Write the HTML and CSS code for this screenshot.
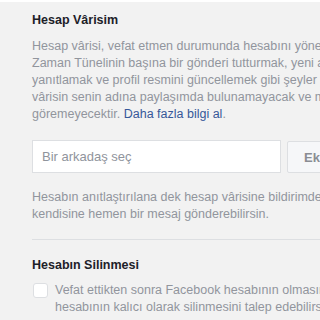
FILE: index.html
```html
<!DOCTYPE html>
<html lang="tr">
<head>
  <meta charset="UTF-8">
  <meta name="viewport" content="width=device-width, initial-scale=1.0">
  <title>Hesap Vârisim</title>
  <link rel="stylesheet" href="styles.css">
</head>
<body>
  <div class="page">
    <div class="section">
      <h3 class="title">Hesap Vârisim</h3>
      <p class="text">
        Hesap vârisi, vefat etmen durumunda hesabını yönetebilecek kişidir. Hesap vârisi,<br>
        Zaman Tünelinin başına bir gönderi tutturmak, yeni arkadaşlık isteklerini<br>
        yanıtlamak ve profil resmini güncellemek gibi şeyler yapabilir. Hesap<br>
        vârisin senin adına paylaşımda bulunamayacak ve mesajlarını<br>
        göremeyecektir. <a href="#" class="link">Daha fazla bilgi al</a>.
      </p>
      <form class="picker">
        <input type="text" class="friend" placeholder="Bir arkadaş seç">
        <button type="button" class="add">Ekle</button>
      </form>
      <p class="text note">
        Hesabın anıtlaştırılana dek hesap vârisine bildirimde bulunmayacağız ama<br>
        kendisine hemen bir mesaj gönderebilirsin.
      </p>
    </div>
    <div class="divider"></div>
    <div class="section">
      <h3 class="title">Hesabın Silinmesi</h3>
      <label class="check">
        <span class="box"></span>
        <span class="text">
          Vefat ettikten sonra Facebook hesabının olmasını istemiyorsan<br>
          hesabının kalıcı olarak silinmesini talep edebilirsin.
        </span>
      </label>
    </div>
  </div>
</body>
</html>
```

FILE: styles.css
```css
html, body { margin: 0; padding: 0; }
body { background: #f2f2f2; font-family: "Liberation Sans", Arial, sans-serif; font-size: 12.5px; overflow: hidden; border-top: 2px solid #fff; }
.page { width: 700px; padding-left: 32px; }
.title { margin: 10px 0 0; font-size: 12.5px; line-height: 16px; font-weight: bold; color: #1d2129; }
.text { color: #91959d; line-height: 17px; white-space: nowrap; }
p.text { margin: 10px 0 0; }
.link { color: #365899; text-decoration: none; }
.picker { display: flex; gap: 6px; margin-top: 17px; }
.friend { width: 249px; height: 33px; box-sizing: border-box; margin: 0; border: 1px solid #dddfe2; background: #fff; padding: 0 9px; font-family: inherit; font-size: 13px; color: #1d2129; outline: none; }
.friend::placeholder { color: #90949c; }
.add { height: 32px; margin-top: 1px; box-sizing: border-box; border: 1px solid #dddfe2; border-radius: 2px; background: #f6f7f9; padding: 0 16px; font-family: inherit; font-size: 13px; font-weight: bold; color: #8a8d93; }
p.note { margin-top: 16px; }
.divider { height: 1px; background: #dddfe2; margin: 16px 0 0; }
.divider + .section .title { margin-top: 17px; }
.check { display: flex; gap: 7px; margin-top: 9px; }
.box { width: 13px; height: 13px; margin: 1px 0 0 1px; flex: none; background: #fff; border: 1px solid #dddfe2; border-radius: 3px; }
```
